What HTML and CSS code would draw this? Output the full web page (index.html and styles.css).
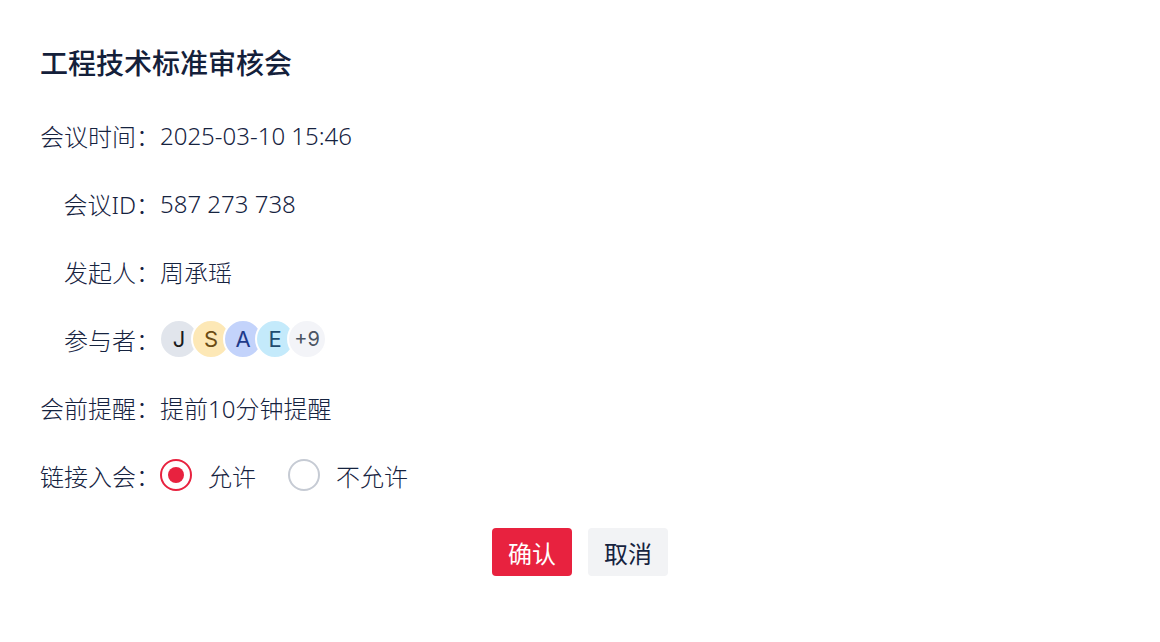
FILE: index.html
```html
<!DOCTYPE html>
<html lang="zh-CN">
<head>
    <meta charset="UTF-8">
    <meta name="viewport" content="width=device-width, initial-scale=1.0">
    <title>会议详情</title>
    <link rel="stylesheet" href="styles.css">
</head>
<body>
    <div class="meeting">
        <h1 class="title">工程技术标准审核会</h1>
        <div class="rows">
            <div class="row">
                <span class="label">会议时间：</span>
                <span class="value">2025-03-10 15:46</span>
            </div>
            <div class="row">
                <span class="label">会议ID：</span>
                <span class="value">587 273 738</span>
            </div>
            <div class="row">
                <span class="label">发起人：</span>
                <span class="value">周承瑶</span>
            </div>
            <div class="row">
                <span class="label">参与者：</span>
                <div class="avatars">
                    <span class="avatar avatar-j">J</span>
                    <span class="avatar avatar-s">S</span>
                    <span class="avatar avatar-a">A</span>
                    <span class="avatar avatar-e">E</span>
                    <span class="avatar avatar-more">+9</span>
                </div>
            </div>
            <div class="row">
                <span class="label">会前提醒：</span>
                <span class="value">提前10分钟提醒</span>
            </div>
            <div class="row">
                <span class="label">链接入会：</span>
                <div class="radios">
                    <label class="radio">
                        <input type="radio" name="join" checked>
                        <span class="radio-mark"></span>
                        <span>允许</span>
                    </label>
                    <label class="radio">
                        <input type="radio" name="join">
                        <span class="radio-mark"></span>
                        <span>不允许</span>
                    </label>
                </div>
            </div>
        </div>
        <div class="actions">
            <button class="btn btn-primary">确认</button>
            <button class="btn btn-default">取消</button>
        </div>
    </div>
</body>
</html>
```

FILE: styles.css
```css
*{
    box-sizing: border-box;
}
body{
    margin: 0;
    background: #fff;
    color: #16233f;
    font-family: "Noto Sans", "Noto Sans CJK SC", sans-serif;
}
.meeting{
    padding: 42px 40px;
}
.title{
    margin: 0 0 29px;
    font-family: "Noto Sans CJK SC", sans-serif;
    font-size: 28px;
    font-weight: 500;
    line-height: 40px;
    color: #14203a;
}
.rows{
    display: flex;
    flex-direction: column;
    gap: 20px;
}
.row{
    display: flex;
    align-items: center;
    height: 48px;
    font-size: 24px;
    font-weight: 300;
}
.label{
    width: 120px;
    text-align: right;
    white-space: nowrap;
}
.value{
    white-space: nowrap;
}

.avatars{
    display: flex;
}
.avatar{
    display: flex;
    align-items: center;
    justify-content: center;
    width: 40px;
    height: 40px;
    border: 2px solid #fff;
    border-radius: 50%;
    font-family: "Inter", "Noto Sans", sans-serif;
    font-size: 22px;
    font-weight: 400;
    margin-left: -8px;
}
.avatar:first-child{
    margin-left: -1px;
}
.avatar-j{ background: #e1e5ec; color: #1a1a1a; }
.avatar-s{ background: #fde8b6; color: #6b4c14; }
.avatar-a{ background: #c3d3fb; color: #1e3a8a; }
.avatar-e{ background: #c4eafb; color: #1f4b6e; }
.avatar-more{ background: #f3f4f8; color: #4b5563; font-size: 20px; }

.radios{
    display: flex;
    gap: 32px;
}
.radio{
    display: flex;
    align-items: center;
    gap: 16px;
    cursor: pointer;
}
.radio input{
    display: none;
}
.radio-mark{
    width: 32px;
    height: 32px;
    border: 2px solid #c6cbd4;
    border-radius: 50%;
    display: flex;
    align-items: center;
    justify-content: center;
}
.radio input:checked + .radio-mark{
    border-color: #e8223f;
}
.radio input:checked + .radio-mark::after{
    content: "";
    width: 16px;
    height: 16px;
    border-radius: 50%;
    background: #e8223f;
}

.actions{
    display: flex;
    justify-content: center;
    gap: 16px;
    margin-top: 29px;
}
.btn{
    height: 48px;
    padding: 0 16px;
    border: 0;
    border-radius: 4px;
    font-family: inherit;
    font-size: 24px;
    cursor: pointer;
}
.btn-primary{
    background: #e8223f;
    color: #fff;
}
.btn-default{
    background: #f2f3f5;
    color: #16233f;
}
```
